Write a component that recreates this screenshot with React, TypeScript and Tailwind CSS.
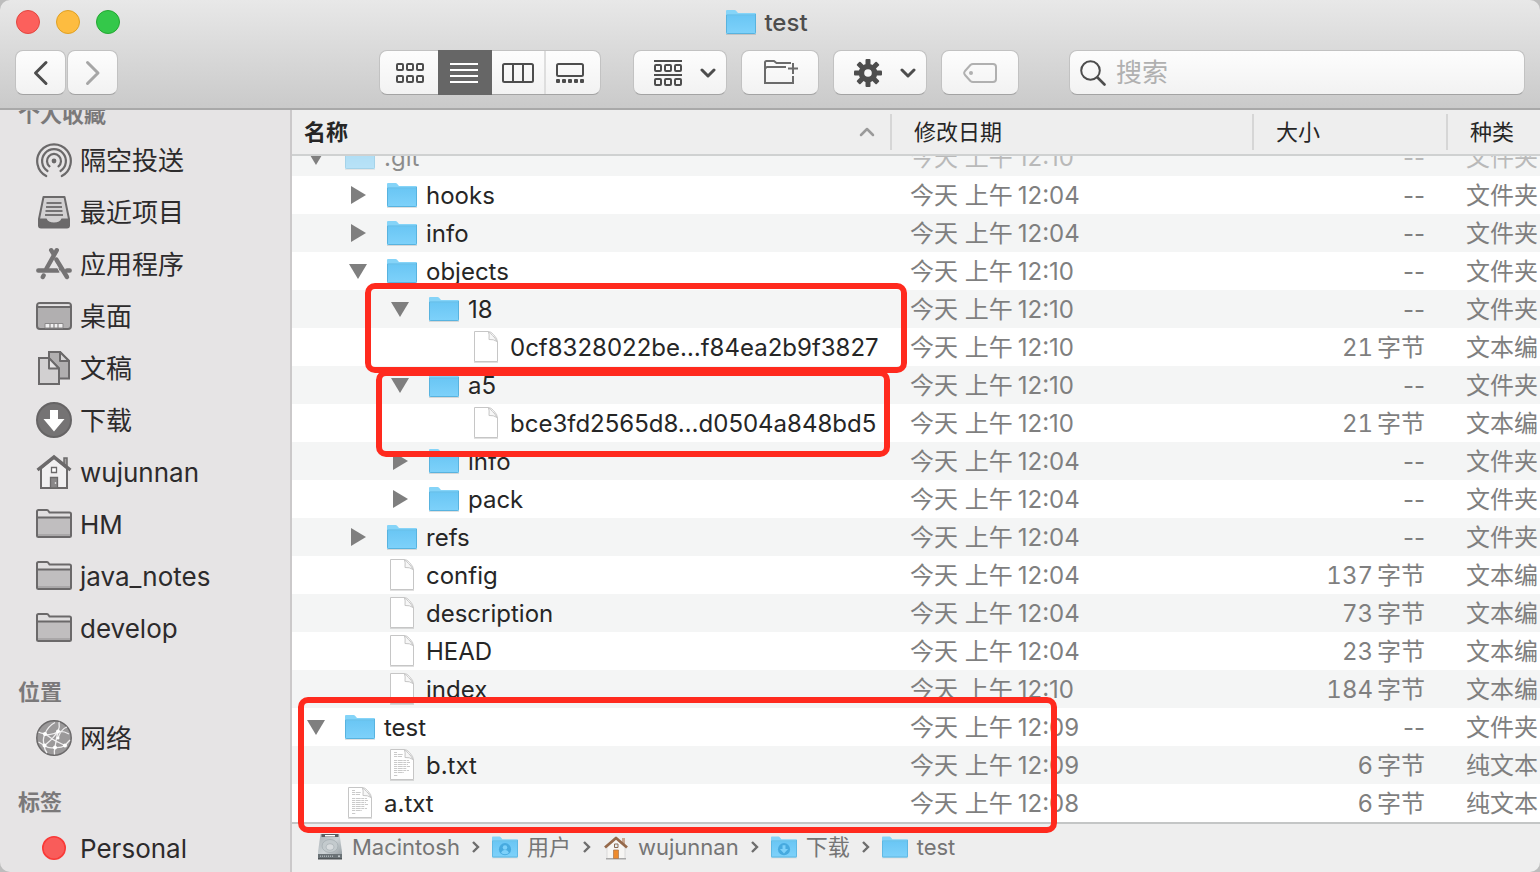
import type { ReactNode } from "react";

type IconProps = { className?: string };

/* ---------- Toolbar icons ---------- */

const BackIcon = () => (
  <svg width="16" height="26" viewBox="0 0 16 26" fill="none" stroke="#4d4d4d" strokeWidth="3" strokeLinecap="round" strokeLinejoin="round" aria-hidden="true">
    <path d="M13 2.500 2.500 13l10.500 10.500" />
  </svg>
);

const ForwardIcon = () => (
  <svg width="16" height="26" viewBox="0 0 16 26" fill="none" stroke="#a6a6a6" strokeWidth="3" strokeLinecap="round" strokeLinejoin="round" aria-hidden="true">
    <path d="M2.500 2.500 13 13 2.500 23.500" />
  </svg>
);

const gridXs = [1, 11, 21];

const GridIcon = () => (
  <svg width="28" height="20" viewBox="0 0 28 20" fill="none" stroke="#4d4d4d" strokeWidth="2" aria-hidden="true">
    {gridXs.map((x) => (
      <g key={x}>
        <rect x={x} y="1" width="6" height="6" rx="1" />
        <rect x={x} y="13" width="6" height="6" rx="1" />
      </g>
    ))}
  </svg>
);

const ListIcon = () => (
  <svg width="28" height="20" viewBox="0 0 28 20" fill="#fff" aria-hidden="true">
    <path d="M0 0h28v2H0zM0 6h28v2H0zM0 12h28v2H0zM0 18h28v2H0z" />
  </svg>
);

const ColumnsIcon = () => (
  <svg width="32" height="20" viewBox="0 0 32 20" fill="none" stroke="#4d4d4d" strokeWidth="2" aria-hidden="true">
    <rect x="1" y="1" width="30" height="18" rx="1.500" />
    <path d="M11 1v18M21 1v18" />
  </svg>
);

const GalleryIcon = () => (
  <svg width="28" height="20" viewBox="0 0 28 20" aria-hidden="true">
    <rect x="1" y="1" width="26" height="12" rx="1.500" fill="none" stroke="#4d4d4d" strokeWidth="2" />
    {[0, 6, 12, 18, 24].map((x) => (
      <rect key={x} x={x} y="16" width="4" height="4" rx="1" fill="#4d4d4d" />
    ))}
  </svg>
);

const GroupIcon = () => (
  <svg width="28" height="26" viewBox="0 0 28 26" fill="none" stroke="#4d4d4d" strokeWidth="2" aria-hidden="true">
    <path d="M0 1h28M0 15h28" />
    {gridXs.map((x) => (
      <g key={x}>
        <rect x={x} y="5" width="6" height="6" rx="1" />
        <rect x={x} y="19" width="6" height="6" rx="1" />
      </g>
    ))}
  </svg>
);

const DownChevron = () => (
  <svg width="16" height="10" viewBox="0 0 16 10" fill="none" stroke="#4d4d4d" strokeWidth="3" strokeLinecap="round" strokeLinejoin="round" aria-hidden="true">
    <path d="m2 2 6 6 6-6" />
  </svg>
);

const NewFolderIcon = () => (
  <svg width="36" height="26" viewBox="0 0 36 26" fill="none" stroke="#6b6b6b" strokeWidth="2" aria-hidden="true">
    <path d="M27 4H12.500L10 2H2.500Q1 2 1 3.500v20.500h28V17M1 9.500 3 8h19M29 4v11M24 9.500h10" />
  </svg>
);

const GearIcon = () => (
  <svg width="28" height="28" viewBox="0 0 28 28" aria-hidden="true">
    <g fill="#4d4d4d">
      {[0, 45, 90, 135].map((a) => (
        <rect key={a} x="11.500" y="0" width="5" height="28" rx="1" transform={`rotate(${a} 14 14)`} />
      ))}
      <circle cx="14" cy="14" r="9.300" />
    </g>
    <circle cx="14" cy="14" r="3.800" fill="#f7f7f7" />
  </svg>
);

const TagIcon = () => (
  <svg width="34" height="20" viewBox="0 0 34 20" fill="none" stroke="#b0b0b0" strokeWidth="2" strokeLinejoin="round" aria-hidden="true">
    <path d="M10 1h20q3 0 3 3v12q0 3-3 3H10q-1.500 0-2.600-1L2 12q-1.600-2 0-4l5.400-6Q8.500 1 10 1z" />
    <circle cx="8" cy="10" r="2" fill="#b0b0b0" stroke="none" />
  </svg>
);

const SearchIcon = () => (
  <svg width="26" height="26" viewBox="0 0 26 26" fill="none" stroke="#4d4d4d" strokeWidth="2" strokeLinecap="round" aria-hidden="true">
    <circle cx="10.500" cy="10.500" r="9.300" />
    <path d="m17.500 17.500 7 7" strokeWidth="2.600" />
  </svg>
);

/* ---------- Sidebar icons ---------- */

const AirDropIcon = () => (
  <svg width="36" height="36" viewBox="0 0 36 36" fill="none" stroke="#6b696a" strokeWidth="2.200" strokeLinecap="round" aria-hidden="true">
    <path d="M10.200 34A16.800 16.800 0 1 1 25.800 34" />
    <path d="M11.500 29A11.900 11.900 0 1 1 24.500 29" />
    <path d="M13.500 24.300A7 7 0 1 1 22.500 24.300" />
    <circle cx="18" cy="19" r="2.400" fill="#6b696a" stroke="none" />
  </svg>
);

const RecentsIcon = () => (
  <svg width="36" height="36" viewBox="0 0 36 36" aria-hidden="true">
    <path d="M7.500 3h21L33 25v6.500q0 2-2 2H5q-2 0-2-2V25z" fill="#d2d0d1" stroke="#6b696a" strokeWidth="2" strokeLinejoin="round" />
    <path d="M3 24.500h7.500q1.500 4 7.500 4t7.500-4H33V31.500q0 2-2 2H5q-2 0-2-2z" fill="#6b696a" />
    <path d="M10.500 9h15M10 13h16M9.500 17h17M9 21h18" stroke="#757374" strokeWidth="1.800" />
  </svg>
);

const AppsIcon = () => (
  <svg width="36" height="36" viewBox="0 0 36 36" fill="none" stroke="#757374" strokeWidth="4.400" strokeLinecap="round" aria-hidden="true">
    <path d="M20.800 4.200 10.500 22.500M7.600 29.500 6.800 31" />
    <path d="M15.200 4.200 17 7.200" />
    <path d="M2.300 24.500h20M31 24.500h2.700" />
    <path d="M20.300 13.500 31 31" />
    <path d="M18 15.500 24.500 27" stroke="#e6e4e5" strokeWidth="1" />
  </svg>
);

const DesktopIcon = () => (
  <svg width="36" height="36" viewBox="0 0 36 36" aria-hidden="true">
    <rect x="1" y="5" width="34" height="26" rx="3" fill="#b1afb0" stroke="#6b696a" strokeWidth="2" />
    <path d="M2.500 6.200h31v2.500h-31z" fill="#e6e4e5" />
    <path d="M1.500 9h33" stroke="#6b696a" strokeWidth="2" />
    <path d="M9 25.500h18V30H9z" fill="#f0eff0" stroke="#8a8889" strokeWidth="1" />
    <path d="M14 26v4M18 26v4M22 26v4" stroke="#8a8889" strokeWidth="1.200" />
  </svg>
);

const DocumentsIcon = () => (
  <svg width="36" height="36" viewBox="0 0 36 36" stroke="#6b696a" strokeWidth="2" aria-hidden="true">
    <path d="M13 2h11l9 9v17.500H13z" fill="#b1afb0" />
    <path d="M24 2v9h9z" fill="#d8d6d7" strokeLinejoin="round" />
    <path d="M3 8h9.500L23 18.500V34H3z" fill="#d2d0d1" />
    <path d="M13 8v10.500h10z" fill="#e6e4e5" strokeLinejoin="round" />
  </svg>
);

const DownloadsIcon = () => (
  <svg width="36" height="36" viewBox="0 0 36 36" aria-hidden="true">
    <circle cx="18" cy="18" r="17" fill="#757374" stroke="#666465" strokeWidth="2" />
    <path d="M14 8h8v9h6.500L18 29.500 7.500 17H14z" fill="#fff" />
  </svg>
);

const HomeIcon = () => (
  <svg width="36" height="36" viewBox="0 0 36 36" aria-hidden="true">
    <path d="M28 4h3v10h-3z" fill="#a09e9f" stroke="#6b696a" strokeWidth="1.500" />
    <path d="M5 14.500 18 4l13 10.500V34H5z" fill="#f0eff0" stroke="#6b696a" strokeWidth="2" />
    <path d="M1.500 16 18 2.800 34.500 16" fill="none" stroke="#6b696a" strokeWidth="3.200" />
    <path d="M15.500 13.500h5v5h-5z" fill="#fff" stroke="#6b696a" strokeWidth="1.300" />
    <path d="M14.500 23.500h7V34h-7z" fill="#8a8889" stroke="#6b696a" strokeWidth="1.300" />
    <circle cx="19.500" cy="29" r="0.800" fill="#fff" />
  </svg>
);

const SidebarFolderIcon = () => (
  <svg width="36" height="36" viewBox="0 0 36 36" aria-hidden="true">
    <path d="M2.500 4h8.500q1 0 1.500 1l1 1.500H33.500Q35 6.500 35 8v22q0 1-1.500 1h-31Q1 31 1 30V5.500Q1 4 2.500 4z" fill="#e0dedf" stroke="#6b696a" strokeWidth="2" />
    <path d="M2 12h32v18H2z" fill="#c0bebf" />
    <path d="M2 28h32v2H2z" fill="#a9a7a8" />
    <path d="M1 11.500h34" stroke="#6b696a" strokeWidth="2" />
  </svg>
);

const NetworkIcon = () => (
  <svg width="36" height="36" viewBox="0 0 36 36" aria-hidden="true">
    <circle cx="18" cy="18" r="17.200" fill="#9b999a" stroke="#6b696a" strokeWidth="1.500" />
    <g fill="none" stroke="#efeeef" strokeWidth="1.300">
      <path d="M9 14Q12 6 19 2.500M9 14Q16 16 22 11.500 24 7 23 2M9 14Q4 13 2.500 12M9 14Q6 20 8.500 25.500 13 29 19 27.500M8.500 25.500 2.500 22M9 14Q18 21 29 25.500M22 11.500Q28 11 33 14M22 11.500Q20 20 19 27.500 18 31 18.500 34.500M22 18Q25 9 31 7M29 25.500Q32 22 34 20M29 25.500Q25 28 19 27.500M8.500 25.500Q8 29 11 33M8.500 25.500Q16 20 22 11.500" />
    </g>
    <g fill="#fff">
      <circle cx="9" cy="14" r="2" />
      <circle cx="22" cy="11.500" r="2" />
      <circle cx="22" cy="18" r="1.500" />
      <circle cx="8.500" cy="25.500" r="2" />
      <circle cx="19" cy="27.500" r="2" />
      <circle cx="29" cy="25.500" r="2" />
    </g>
  </svg>
);

const RedTagIcon = () => (
  <svg width="36" height="36" viewBox="0 0 36 36" aria-hidden="true">
    <circle cx="18" cy="18" r="11.200" fill="#f95c5a" stroke="#f93a38" strokeWidth="1.600" />
  </svg>
);

/* ---------- File icons ---------- */

const BlueFolder = ({ className, children }: IconProps & { children?: ReactNode }) => (
  <svg className={className} viewBox="0 0 30 26" aria-hidden="true">
    <defs>
      <linearGradient id="folderFront" x1="0" y1="0" x2="0" y2="1">
        <stop offset="0" stopColor="#6ac6f4" />
        <stop offset="1" stopColor="#7dd1fa" />
      </linearGradient>
    </defs>
    <path d="M0 25h30v1H0z" fill="#000" opacity="0.120" />
    <path d="M0 2Q0 1 1 1h7.500q1 0 1.600.7L12 4h17q1 0 1 1v19q0 1-1 1H1q-1 0-1-1z" fill="#85d4f8" />
    <path d="M0.500 6.500h29V24h-29z" fill="url(#folderFront)" />
    <path d="M0.500 6h29" stroke="#5cb9e6" strokeWidth="1" />
    <path d="M0.500 6v17.500q0 1 1 1h27q1 0 1-1V5" fill="none" stroke="#58b3df" strokeWidth="1" />
    {children}
  </svg>
);

const FileIcon = ({ text }: { text?: boolean }) => (
  <svg width="30" height="34" viewBox="0 0 30 34" aria-hidden="true">
    <path d="M3 31.500h24V33H3z" fill="#000" opacity="0.120" />
    <path d="M3.500 1.500h13.500q3 0 5.500 3 4 4 4 7.500v19.500h-23z" fill="#fff" stroke="#c6c6c6" strokeWidth="1" />
    <path d="M17.500 2q1 2 .5 7.500 4.500-.5 8 2-2-4-4.500-6-2-2.500-4-3.500z" fill="#f7f7f7" stroke="#c6c6c6" strokeWidth="1" strokeLinejoin="round" />
    {text && (
      <path
        d="M7 4.500h3M7 6.500h9M7 8.500h8M7 12.500h15M7 14.500h16M7 16.500h14M7 18.500h16M7 20.500h13M7 22.500h15M7 24.500h10M7 27.500h4"
        stroke="#c4c4c4"
        strokeWidth="0.900"
        strokeDasharray="3 0.700 5 0.600"
      />
    )}
  </svg>
);

const Disclosure = ({ open }: { open: boolean }) =>
  open ? (
    <svg width="18" height="18" viewBox="0 0 18 18" aria-hidden="true">
      <path d="M0 2h18L9 17z" fill="#7f7f7f" />
    </svg>
  ) : (
    <svg width="18" height="18" viewBox="0 0 18 18" aria-hidden="true">
      <path d="M2 0v18l15-9z" fill="#7f7f7f" />
    </svg>
  );

/* ---------- Path bar icons ---------- */

const DiskIcon = () => (
  <svg width="26" height="26" viewBox="0 0 26 26" aria-hidden="true">
    <defs>
      <linearGradient id="disk" x1="0" y1="0" x2="1" y2="1">
        <stop offset="0" stopColor="#a9b1b5" />
        <stop offset="0.500" stopColor="#cdd3d6" />
        <stop offset="1" stopColor="#8e979c" />
      </linearGradient>
    </defs>
    <path d="M3.500 0h19l2.500 18v6q0 1-1 1H2q-1 0-1-1v-6z" fill="url(#disk)" />
    <path d="M1 20h24v4q0 1-1 1H2q-1 0-1-1z" fill="#6a7276" />
    <path d="M1 24h24v1.500H1z" fill="#4f5558" />
    <path d="M4.500 0h17v3h-17z" fill="#595f62" />
    <path d="M8 1h10v1.500H8z" fill="#fff" />
    <ellipse cx="13" cy="12" rx="8" ry="6.500" fill="#c3cacd" stroke="#a5adb1" strokeWidth="0.800" />
    <ellipse cx="13" cy="13" rx="4" ry="3.300" fill="#d8dcde" stroke="#a0a8ac" strokeWidth="0.600" />
    <path d="M3 22.300h14" stroke="#aab2b6" strokeWidth="1.500" strokeDasharray="1 1" />
    <circle cx="22" cy="22.300" r="1" fill="#c9d0d4" />
  </svg>
);

const ColorHomeIcon = () => (
  <svg width="26" height="26" viewBox="0 0 26 26" aria-hidden="true">
    <path d="M19 4h3v7h-3z" fill="#c9a791" />
    <path d="M4 13 13 5l9 8v11.500H4z" fill="#f6f5f3" stroke="#cfcfcf" strokeWidth="0.700" />
    <path d="M3 24h20v1.500H3z" fill="#a8a8a8" />
    <path d="m2 13.500 11-9.500 11 9.500" fill="none" stroke="#95694a" strokeWidth="2.800" strokeLinejoin="round" />
    <path d="M11.500 10h3.500v3.500h-3.500z" fill="#e3eef5" stroke="#8d6b52" strokeWidth="1" />
    <path d="M10.500 16h5v8.500h-5z" fill="#ed8a2c" stroke="#a9744c" strokeWidth="0.700" />
  </svg>
);

const UsersFolder = () => (
  <BlueFolder className="h-6 w-[26px]">
    <circle cx="15" cy="15.500" r="7" fill="#47aadf" />
    <circle cx="15" cy="13.500" r="2.600" fill="#7dd1fa" />
    <path d="M10.500 20q1-3.500 4.500-3.500t4.500 3.500q-4.500 3-9 0z" fill="#7dd1fa" />
  </BlueFolder>
);

const DownloadsFolder = () => (
  <BlueFolder className="h-6 w-[26px]">
    <circle cx="15" cy="15.500" r="7" fill="#47aadf" />
    <path d="M13.300 11h3.400v4.300h3L15 20.500l-4.700-5.200h3z" fill="#7dd1fa" />
  </BlueFolder>
);

const PathChevron = () => (
  <svg className="mx-3" width="8" height="12" viewBox="0 0 8 12" fill="none" stroke="#6e6e6e" strokeWidth="2.400" aria-hidden="true">
    <path d="m1 1 5 5-5 5" />
  </svg>
);

/* ---------- Data ---------- */

type SidebarItem = { label: string; icon: ReactNode };

const sections: { title: string; items: SidebarItem[] }[] = [
  {
    title: "个人收藏",
    items: [
      { label: "隔空投送", icon: <AirDropIcon /> },
      { label: "最近项目", icon: <RecentsIcon /> },
      { label: "应用程序", icon: <AppsIcon /> },
      { label: "桌面", icon: <DesktopIcon /> },
      { label: "文稿", icon: <DocumentsIcon /> },
      { label: "下载", icon: <DownloadsIcon /> },
      { label: "wujunnan", icon: <HomeIcon /> },
      { label: "HM", icon: <SidebarFolderIcon /> },
      { label: "java_notes", icon: <SidebarFolderIcon /> },
      { label: "develop", icon: <SidebarFolderIcon /> },
    ],
  },
  { title: "位置", items: [{ label: "网络", icon: <NetworkIcon /> }] },
  { title: "标签", items: [{ label: "Personal", icon: <RedTagIcon /> }] },
];

type Entry = {
  name: string;
  level: 0 | 1 | 2 | 3;
  icon: "folder" | "file" | "text";
  open?: boolean;
  time: string;
  bytes?: number;
  kind: string;
};

const entries: Entry[] = [
  { name: ".git", level: 0, icon: "folder", open: true, time: "12:10", kind: "文件夹" },
  { name: "hooks", level: 1, icon: "folder", open: false, time: "12:04", kind: "文件夹" },
  { name: "info", level: 1, icon: "folder", open: false, time: "12:04", kind: "文件夹" },
  { name: "objects", level: 1, icon: "folder", open: true, time: "12:10", kind: "文件夹" },
  { name: "18", level: 2, icon: "folder", open: true, time: "12:10", kind: "文件夹" },
  { name: "0cf8328022be…f84ea2b9f3827", level: 3, icon: "file", time: "12:10", bytes: 21, kind: "文本编" },
  { name: "a5", level: 2, icon: "folder", open: true, time: "12:10", kind: "文件夹" },
  { name: "bce3fd2565d8…d0504a848bd5", level: 3, icon: "file", time: "12:10", bytes: 21, kind: "文本编" },
  { name: "info", level: 2, icon: "folder", open: false, time: "12:04", kind: "文件夹" },
  { name: "pack", level: 2, icon: "folder", open: false, time: "12:04", kind: "文件夹" },
  { name: "refs", level: 1, icon: "folder", open: false, time: "12:04", kind: "文件夹" },
  { name: "config", level: 1, icon: "file", time: "12:04", bytes: 137, kind: "文本编" },
  { name: "description", level: 1, icon: "file", time: "12:04", bytes: 73, kind: "文本编" },
  { name: "HEAD", level: 1, icon: "file", time: "12:04", bytes: 23, kind: "文本编" },
  { name: "index", level: 1, icon: "file", time: "12:10", bytes: 184, kind: "文本编" },
  { name: "test", level: 0, icon: "folder", open: true, time: "12:09", kind: "文件夹" },
  { name: "b.txt", level: 1, icon: "text", time: "12:09", bytes: 6, kind: "纯文本" },
  { name: "a.txt", level: 0, icon: "text", time: "12:08", bytes: 6, kind: "纯文本" },
];

const indent = ["pl-[15px]", "pl-[57px]", "pl-[99px]", "pl-[141px]"];

const path: SidebarItem[] = [
  { label: "Macintosh", icon: <DiskIcon /> },
  { label: "用户", icon: <UsersFolder /> },
  { label: "wujunnan", icon: <ColorHomeIcon /> },
  { label: "下载", icon: <DownloadsFolder /> },
  { label: "test", icon: <BlueFolder className="h-6 w-[26px]" /> },
];

/* ---------- Parts ---------- */

const control =
  "flex h-[45px] items-center justify-center rounded-lg border border-[#c2c2c2] border-b-[#a3a3a3] bg-linear-to-b from-[#fdfdfd] to-[#f2f2f2]";

function Toolbar() {
  return (
    <header className="shrink-0 border-b-2 border-[#a9a9a9] bg-linear-to-b from-[#e8e8e8] to-[#cacaca]">
      <div className="grid h-11 grid-cols-[1fr_auto_1fr] items-center px-4">
        <div className="flex gap-4">
          <button aria-label="关闭" className="size-6 rounded-full border border-[#e2463f] bg-[#fc605c]" />
          <button aria-label="最小化" className="size-6 rounded-full border border-[#dfa023] bg-[#fdbc40]" />
          <button aria-label="缩放" className="size-6 rounded-full border border-[#24a732] bg-[#34c84a]" />
        </div>
        <h1 className="flex items-center gap-2 pr-1.5 text-2xl font-medium text-[#4d4d4d]">
          <BlueFolder className="h-[26px] w-[30px]" />
          <span className="pt-0.5">test</span>
        </h1>
      </div>
      <div className="flex h-16 items-start px-[15px] pt-1.5">
        <div className="flex gap-px">
          <button aria-label="后退" className={`${control} w-[51px]`}>
            <BackIcon />
          </button>
          <button aria-label="前进" className={`${control} w-[51px]`}>
            <ForwardIcon />
          </button>
        </div>
        <div className={`${control} ml-[261px] w-[222px]`}>
          <button aria-label="图标" className="flex h-full w-[58px] items-center justify-center pl-0.5">
            <GridIcon />
          </button>
          <button aria-label="列表" aria-pressed="true" className="-my-px flex h-[45px] w-[54px] items-center justify-center bg-[#666] pr-0.5">
            <ListIcon />
          </button>
          <button aria-label="分栏" className="flex h-full w-[54px] items-center justify-center border-r-2 border-[#dedede]">
            <ColumnsIcon />
          </button>
          <button aria-label="画廊" className="flex h-full w-[54px] items-center justify-center pr-1.5">
            <GalleryIcon />
          </button>
        </div>
        <button aria-label="分组" className={`${control} ml-8 w-[94px] gap-[18px] pl-2.5`}>
          <GroupIcon />
          <DownChevron />
        </button>
        <button aria-label="新建文件夹" className={`${control} ml-3.5 w-[78px] pb-0.5 pl-1`}>
          <NewFolderIcon />
        </button>
        <button aria-label="操作" className={`${control} ml-3.5 w-[94px] gap-[18px] pl-2.5`}>
          <GearIcon />
          <DownChevron />
        </button>
        <button aria-label="标记" className={`${control} ml-3.5 w-[78px]`}>
          <TagIcon />
        </button>
        <label className={`${control} ml-[50px] min-w-0 flex-1 justify-start gap-2.5 px-2.5`}>
          <SearchIcon />
          <input
            type="text"
            aria-label="搜索"
            placeholder="搜索"
            className="min-w-0 flex-1 bg-transparent text-[26px] leading-9 outline-none placeholder:text-[#b0b0b0]"
          />
        </label>
      </div>
    </header>
  );
}

function Sidebar() {
  return (
    <aside className="w-[292px] shrink-0 overflow-hidden border-r-2 border-[#cbc9ca] bg-[#e6e4e5]">
      <nav className="-mt-[33px]">
        {sections.map((section) => (
          <section key={section.title}>
            <h2 className="flex h-[58px] items-center pt-4 pl-[18px] text-[22px] leading-8 font-bold text-[#7b797a]">{section.title}</h2>
            <ul>
              {section.items.map((item) => (
                <li key={item.label}>
                  <a href="#" className="flex h-[52px] items-center gap-2 pb-0.5 pl-9 text-[26px] text-[#2d2b2c]">
                    {item.icon}
                    {item.label}
                  </a>
                </li>
              ))}
            </ul>
          </section>
        ))}
      </nav>
    </aside>
  );
}

function HeaderCell({ children, last }: { children: ReactNode; last?: boolean }) {
  return (
    <div className={`my-1 flex h-9 items-center justify-between ${last ? "" : "border-r-2 border-[#d6d6d6]"}`}>{children}</div>
  );
}

function EntryRow({ entry, clipped }: { entry: Entry; clipped: boolean }) {
  const cell = clipped ? "flex h-5 items-end overflow-hidden" : "flex h-[38px] items-end overflow-hidden";
  const fade = clipped ? "opacity-50" : "";
  const line = "flex h-[38px] shrink-0 items-center";
  return (
    <tr className="odd:bg-[#f4f5f5] even:bg-white">
      <td className="p-0">
        <div className={cell}>
          <div className={`${line} ${indent[entry.level]}`}>
            {entry.open === undefined ? (
              <span className="w-[18px]" />
            ) : (
              <button aria-label={entry.open ? "折叠" : "展开"} aria-expanded={entry.open}>
                <Disclosure open={entry.open} />
              </button>
            )}
            <span className={`ml-5 flex items-center gap-[9px] text-[#262626] ${fade}`}>
              {entry.icon === "folder" ? <BlueFolder className="h-[26px] w-[30px]" /> : <FileIcon text={entry.icon === "text"} />}
              <span className="pt-0.5">{entry.name}</span>
            </span>
          </div>
        </div>
      </td>
      <td className="p-0">
        <div className={`${cell} pl-[18px]`}>
          <div className={`${line} pt-0.5 ${fade}`}>
            今天 上午<span className="ml-[5px]">{entry.time}</span>
          </div>
        </div>
      </td>
      <td className="p-0">
        <div className={`${cell} justify-end pr-[23px]`}>
          <div className={`${line} pt-0.5 ${fade}`}>
            {entry.bytes === undefined ? (
              "--"
            ) : (
              <>
                <span className="tabular-nums">{entry.bytes}</span>
                <span className="ml-1">字节</span>
              </>
            )}
          </div>
        </div>
      </td>
      <td className="p-0">
        <div className={`${cell} pl-[18px]`}>
          <div className={`${line} pt-0.5 ${fade}`}>{entry.kind}</div>
        </div>
      </td>
    </tr>
  );
}

function FileTable() {
  return (
    <div className="min-h-0 flex-1 overflow-hidden bg-white">
      <table className="w-full table-fixed border-collapse text-2xl whitespace-nowrap text-[#7f7f7f]">
        <colgroup>
          <col />
          <col className="w-[362px]" />
          <col className="w-[194px]" />
          <col className="w-[92px]" />
        </colgroup>
        <thead className="bg-[#eee] text-left text-[22px] leading-8 text-[#262626]">
          <tr className="border-b-2 border-[#cfd1d1]">
            <th scope="col" aria-sort="ascending" className="p-0 pl-3 font-bold">
              <HeaderCell>
                名称
                <svg className="mr-[15px]" width="16" height="10" viewBox="0 0 16 10" fill="none" stroke="#9a9a9a" strokeWidth="2.500" strokeLinecap="round" strokeLinejoin="round" aria-hidden="true">
                  <path d="m2 8 6-6 6 6" />
                </svg>
              </HeaderCell>
            </th>
            <th scope="col" className="p-0 pl-[22px] font-normal">
              <HeaderCell>修改日期</HeaderCell>
            </th>
            <th scope="col" className="p-0 pl-[22px] font-normal">
              <HeaderCell>大小</HeaderCell>
            </th>
            <th scope="col" className="p-0 pl-[22px] font-normal">
              <HeaderCell last>种类</HeaderCell>
            </th>
          </tr>
        </thead>
        <tbody>
          {entries.map((entry, i) => (
            <EntryRow key={i} entry={entry} clipped={i === 0} />
          ))}
        </tbody>
      </table>
    </div>
  );
}

function PathBar() {
  return (
    <nav className="flex h-[50px] shrink-0 items-center border-t-2 border-[#c4c6c6] bg-[#eee] pb-0.5 pl-[25px] text-[22px] text-[#757575]">
      {path.map((item, i) => (
        <div key={item.label} className="flex items-center">
          {i > 0 && <PathChevron />}
          <a href="#" className="flex items-center gap-[9px]">
            {item.icon}
            {item.label}
          </a>
        </div>
      ))}
    </nav>
  );
}

export default function App() {
  return (
    <div className="h-screen bg-[#bdbdbd] font-['Inter','Noto_Sans_CJK_SC',sans-serif]">
      <div className="relative flex h-full flex-col overflow-hidden rounded-[10px]">
        <Toolbar />
        <div className="flex min-h-0 flex-1">
          <Sidebar />
          <main className="flex min-w-0 flex-1 flex-col">
            <FileTable />
            <PathBar />
          </main>
        </div>
        <div className="pointer-events-none absolute top-[283px] left-[365px] h-[90px] w-[542px] rounded-[10px] border-6 border-[#ff2a1e]" />
        <div className="pointer-events-none absolute top-[370px] left-[376px] h-[87px] w-[514px] rounded-[10px] border-6 border-[#ff2a1e]" />
        <div className="pointer-events-none absolute top-[697px] left-[298px] h-[136px] w-[759px] rounded-[10px] border-6 border-[#ff2a1e]" />
      </div>
    </div>
  );
}
